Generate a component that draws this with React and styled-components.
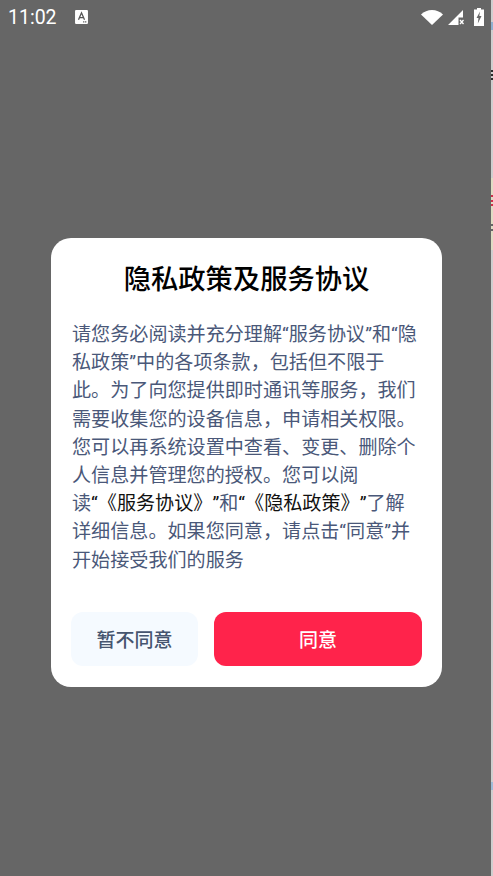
import React from 'react';
import styled, { createGlobalStyle } from 'styled-components';

const GlobalStyle = createGlobalStyle`
  html, body {
    margin: 0;
    padding: 0;
    background: #666666;
  }
`;

export default function App() {
  return (
    <Screen>
      <GlobalStyle />
      <EdgeSliver />
      <StatusBar>
        <StatusLeft>
          <Clock>11:02</Clock>
          <NoticeIcon viewBox="0 0 12 13">
            <rect width="12" height="13" rx="1" fill="#fff" />
            <path d="M3.2 9 6 2.6 8.8 9M4.2 7h3.6" fill="none" stroke="#555" strokeWidth="1.2" />
            <path d="M7.5 11h3.5" stroke="#555" strokeWidth="1" strokeDasharray="1 .6" />
          </NoticeIcon>
        </StatusLeft>
        <StatusRight>
          <svg width="22" height="16" viewBox="0 0 22 16">
            <path d="M0 5.5C3 2.500 6.800 1 11 1s8 1.500 11 4.500L11 16z" fill="#fff" />
          </svg>
          <svg width="17" height="16" viewBox="0 0 17 16">
            <path d="M0 16 15 1v7.500H10.500V16z" fill="#fff" />
            <path d="m12 11 3.500 4m0-4-3.500 4" stroke="#fff" strokeWidth="1.300" />
          </svg>
          <BatteryIcon width="10" height="18" viewBox="0 0 10 18">
            <path d="M3 0h4v1.500h3V18H0V1.500h3z" fill="#fff" />
            <path d="M6 3.500 2.500 10h2L3.800 15.500 7.500 8h-2.200z" fill="#666" />
          </BatteryIcon>
        </StatusRight>
      </StatusBar>
      <Dialog>
        <Title>隐私政策及服务协议</Title>
        <Body>
          请您务必阅读并充分理解“服务协议”和“隐<br />
          私政策”中的各项条款，包括但不限于<br />
          此。为了向您提供即时通讯等服务，我们<br />
          需要收集您的设备信息，申请相关权限。<br />
          您可以再系统设置中查看、变更、删除个<br />
          人信息并管理您的授权。您可以阅<br />
          读<Strong>“《服务协议》”</Strong>和<Strong>“《隐私政策》”</Strong>了解<br />
          详细信息。如果您同意，请点击“同意”并<br />
          开始接受我们的服务
        </Body>
        <Actions>
          <DeclineButton>暂不同意</DeclineButton>
          <AcceptButton>同意</AcceptButton>
        </Actions>
      </Dialog>
    </Screen>
  );
}

const Screen = styled.div`
  position: relative;
  width: 493px;
  height: 876px;
  overflow: hidden;
  background: #666666;
  font-family: Roboto, 'Noto Sans CJK SC', sans-serif;
`;

// thin strip of the page underneath, showing past the dim layer
const EdgeSliver = styled.div`
  position: absolute;
  top: 0;
  right: 0;
  width: 2px;
  height: 100%;
  background: linear-gradient(
    to bottom,
    #cfcfcf 22px,
    #8fb0d0 22px 30px,
    #cfcfcf 30px 70px,
    #2a2a2a 70px 72px,
    #cfcfcf 72px 74px,
    #2a2a2a 74px 76px,
    #cfcfcf 76px 78px,
    #2a2a2a 78px 80px,
    #cfcfcf 80px 178px,
    #e0dcc4 178px 195px,
    #d0304a 195px 197px,
    #e0dcc4 197px 200px,
    #d0304a 200px 202px,
    #e0dcc4 202px 204px,
    #d0304a 204px 206px,
    #e0dcc4 206px 224px,
    #666666 224px 226px,
    #e0dcc4 226px 229px,
    #666666 229px 231px,
    #e0dcc4 231px 250px,
    #cfcfcf 250px 782px,
    #a0bcd8 782px 790px,
    #cfcfcf 790px
  );
`;

const StatusBar = styled.div`
  height: 34px;
  padding: 0 9px 0 8px;
  display: flex;
  align-items: center;
  justify-content: space-between;
`;

const StatusLeft = styled.div`
  display: flex;
  align-items: center;
  gap: 18px;
`;

const Clock = styled.span`
  color: #ffffff;
  font-size: 19.5px;
`;

const NoticeIcon = styled.svg`
  width: 13px;
  height: 14px;
`;

const StatusRight = styled.div`
  display: flex;
  align-items: center;
  gap: 5px;
`;

const BatteryIcon = styled.svg`
  margin-left: 4px;
`;

const Dialog = styled.div`
  width: 391px;
  height: 449px;
  box-sizing: border-box;
  margin: 204px 0 0 51px;
  padding: 24px 20px 21px;
  background: #ffffff;
  border-radius: 20px;
  display: flex;
  flex-direction: column;
`;

const Title = styled.h1`
  margin: 0;
  color: #000000;
  font-size: 27.3px;
  line-height: 36px;
  font-weight: 500;
  text-align: center;
`;

const Body = styled.p`
  margin: 23px 0 0 1px;
  color: #4a5879;
  font-size: 19.1px;
  line-height: 28.2px;
  white-space: nowrap;
  text-spacing-trim: space-all;
`;

const Strong = styled.span`
  color: #111111;
`;

const Actions = styled.div`
  margin-top: auto;
  display: flex;
  gap: 16px;
`;

const DeclineButton = styled.button`
  width: 127px;
  height: 54px;
  padding: 0 0 2px;
  border: 0;
  border-radius: 12px;
  background: #f5faff;
  color: #46556f;
  font-family: inherit;
  font-size: 19px;
  font-weight: 500;
`;

const AcceptButton = styled(DeclineButton)`
  flex: 1;
  background: #ff234b;
  color: #ffffff;
`;
